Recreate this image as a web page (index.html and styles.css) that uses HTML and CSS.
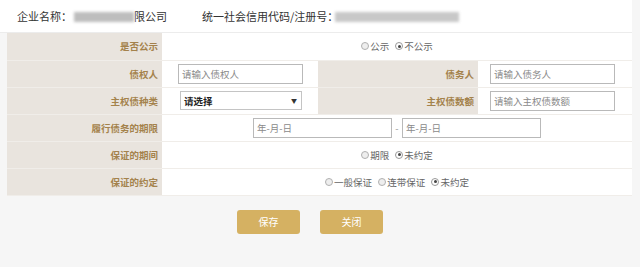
FILE: index.html
```html
<!DOCTYPE html>
<html lang="zh-CN">
<head>
    <meta charset="UTF-8">
    <title>担保信息</title>
    <link rel="stylesheet" href="styles.css">
</head>
<body>
    <div class="page">
        <div class="header">
            <span class="head-item">企业名称：<span class="blur blur-name"></span>限公司</span>
            <span class="head-item">统一社会信用代码/注册号：<span class="blur blur-code"></span></span>
        </div>

        <table class="form-table">
            <colgroup>
                <col class="c-label">
                <col class="c-value">
                <col class="c-label2">
                <col class="c-value2">
            </colgroup>
            <tr>
                <th>是否公示</th>
                <td colspan="3" class="center">
                    <label class="radio"><i></i>公示</label>
                    <label class="radio"><i class="on"></i>不公示</label>
                </td>
            </tr>
            <tr>
                <th>债权人</th>
                <td><input class="text" type="text" placeholder="请输入债权人"></td>
                <th>债务人</th>
                <td class="right"><input class="text" type="text" placeholder="请输入债务人"></td>
            </tr>
            <tr>
                <th>主权债种类</th>
                <td><div class="select"><span>请选择</span><span class="arrow">▼</span></div></td>
                <th>主权债数额</th>
                <td class="right"><input class="text" type="text" placeholder="请输入主权债数额"></td>
            </tr>
            <tr>
                <th>履行债务的期限</th>
                <td colspan="3">
                    <div class="date-range">
                        <input class="date" type="text" placeholder="年-月-日">
                        <span class="dash">-</span>
                        <input class="date" type="text" placeholder="年-月-日">
                    </div>
                </td>
            </tr>
            <tr>
                <th>保证的期间</th>
                <td colspan="3" class="center">
                    <label class="radio"><i></i>期限</label>
                    <label class="radio"><i class="on"></i>未约定</label>
                </td>
            </tr>
            <tr>
                <th>保证的约定</th>
                <td colspan="3" class="center">
                    <label class="radio"><i></i>一般保证</label>
                    <label class="radio"><i></i>连带保证</label>
                    <label class="radio"><i class="on"></i>未约定</label>
                </td>
            </tr>
        </table>

        <div class="buttons">
            <button class="btn">保存</button>
            <button class="btn">关闭</button>
        </div>
    </div>
</body>
</html>
```

FILE: styles.css
```css
body {
    margin: 0;
    padding: 0;
    background-color: #f6f6f6;
    font-family: "Noto Sans CJK SC", "Liberation Sans", sans-serif;
    color: #333;
}

.page {
    width: 632px;
}

.header {
    height: 33px;
    background-color: #fff;
    border-bottom: 1px solid #ececec;
    box-sizing: border-box;
    display: flex;
    align-items: center;
    font-size: 11px;
    color: #333;
}

.head-item:first-child {
    margin-left: 17px;
    width: 185px;
}

.blur {
    display: inline-block;
    height: 10px;
    vertical-align: -1px;
    background: #bdbdbd;
    filter: blur(1.5px);
}

.blur-name {
    width: 60px;
    margin-left: 2px;
}

.blur-code {
    width: 124px;
    margin-left: -3px;
    background: #c8c8c8;
}

/* 表格 */
.form-table {
    margin-left: 7px;
    width: 625px;
    border-collapse: collapse;
    table-layout: fixed;
    background-color: #fff;
    font-size: 9.5px;
}

.c-label { width: 155px; }
.c-value { width: 156px; }
.c-label2 { width: 160px; }
.c-value2 { width: 154px; }

.form-table tr {
    height: 27px;
    border-bottom: 1px solid #f0ede9;
}

.form-table th {
    background-color: #e9e4de;
    color: #a4824c;
    font-weight: bold;
    text-align: right;
    padding: 0 4px 0 0;
}

.form-table td {
    padding: 0 0 0 16px;
}

.form-table td.right {
    padding-left: 12px;
}

.form-table td.center {
    text-align: center;
    padding: 0;
    color: #666;
}

.date-range {
    display: flex;
    align-items: center;
    padding-left: 75px;
}

input.text, input.date {
    box-sizing: border-box;
    height: 20px;
    border: 1px solid #b9b9b9;
    font-family: inherit;
    font-size: 9.5px;
    padding: 0 3px;
    outline: none;
    vertical-align: middle;
}

input.text {
    width: 125px;
}

input.date {
    width: 139px;
}

input::placeholder {
    color: #8a8a8a;
}

.dash {
    width: 10px;
    text-align: center;
    color: #999;
}

.select {
    box-sizing: border-box;
    width: 122px;
    height: 19px;
    margin-left: 2px;
    border: 1px solid #c4c4c4;
    display: flex;
    align-items: center;
    justify-content: space-between;
    padding: 0 4px 0 3px;
    color: #222;
    font-weight: bold;
    font-size: 9.5px;
}

.select .arrow {
    font-size: 6px;
    color: #333;
}

.radio {
    display: inline-flex;
    align-items: center;
    margin: 0 2px;
}

.radio i {
    display: inline-block;
    box-sizing: border-box;
    width: 8px;
    height: 8px;
    border: 1px solid #b0b0b0;
    border-radius: 50%;
    background: #eee;
    margin-right: 1px;
    position: relative;
}

.radio i.on {
    background: #fff;
    border-color: #999;
}

.radio i.on::after {
    content: "";
    position: absolute;
    left: 1.5px;
    top: 1.5px;
    width: 3px;
    height: 3px;
    border-radius: 50%;
    background: #444;
}

.buttons {
    display: flex;
    justify-content: center;
    gap: 20px;
    padding: 14px 12px 0 0;
}

.btn {
    width: 63px;
    height: 24px;
    border: none;
    border-radius: 3px;
    background-color: #d5b162;
    color: #fff;
    font-family: inherit;
    font-size: 10px;
    cursor: pointer;
}
```
